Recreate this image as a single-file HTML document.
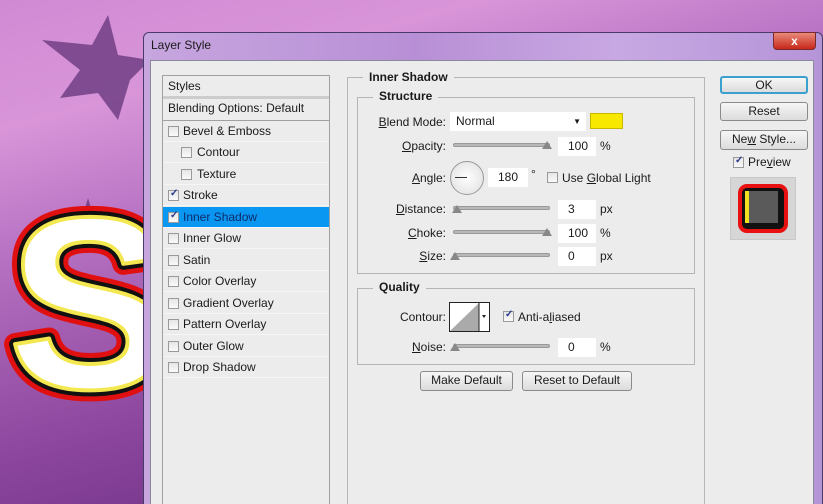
<!DOCTYPE html>
<html style="overflow:hidden"><head><style>
*{box-sizing:border-box;margin:0;padding:0}
html,body{width:823px;height:504px;overflow:hidden}
body{position:relative;font-family:"Liberation Sans",sans-serif;font-size:12px;color:#1a1a1a;
background:linear-gradient(165deg,#d08ad4 0%,#d995d8 18%,#b873c4 35%,#a05aae 50%,#8a449c 65%,#6e3284 85%,#5a2870 100%)}
.abs{position:absolute}
.dlg{left:143px;top:32px;width:680px;height:480px;border:1px solid #4a3a6a;border-radius:6px 6px 0 0;background:linear-gradient(90deg,#c7a6df,#b88fd6 40%,#c8a8e2 70%,#b594d8);}
.client{left:150px;top:60px;width:664px;height:450px;background:#ececec;border:1px solid #8a8a9a}
.list{left:162px;top:75px;width:168px;height:440px;border:1px solid #a0a0a0;background:#ececec}
.row{position:absolute;left:0;width:166px;height:21px;border-bottom:1px solid #f6f6f6;line-height:21px;padding-left:20px;font-size:12px}
.cb{position:absolute;width:11px;height:11px;border:1px solid #9a9a9a;background:linear-gradient(#e6e6e6,#fafafa);top:5px;left:5px}
.cb.on::after{content:"✓";position:absolute;left:1px;top:-3px;font-size:10px;line-height:12px;color:#2a3a8a;font-weight:bold}
.sel{background:#0a97f2;color:#0c2a6a}
.box{position:absolute;border:1px solid #b5b5b5}
.leg{position:absolute;background:#ececec;font-weight:bold;padding:0 6px;font-size:12px}
.lbl{position:absolute;text-align:right;font-size:12px}
.inp{position:absolute;background:#fff;height:19px;line-height:19px;padding-left:10px;font-size:12px}
.sl{position:absolute;height:4px;border-radius:2px;background:#b8b8b8;border:1px solid #999}
.th{position:absolute;width:0;height:0;border-left:5px solid transparent;border-right:5px solid transparent;border-bottom:8px solid #888}
.btn{position:absolute;border:1px solid #8a8a8a;border-radius:3px;background:linear-gradient(#f6f6f6,#dcdcdc);text-align:center;font-size:12px;line-height:17px}
u{text-decoration:underline}
</style></head><body>
<svg class="abs" style="left:0;top:0" width="150" height="504">
<polygon points="108,15 118,55 150,60 130,80 118,120 98,93 60,98 80,70 42,40 92,45" fill="#6a3a80" opacity=".8"/>
<polygon points="88,198 93,215 108,217 95,225 97,238 87,230 75,238 78,225 68,217 83,215" fill="#6a3a80" opacity=".8"/>
<text x="8" y="388" font-family="Liberation Sans" font-weight="bold" font-size="245" fill="#fff" stroke="#e01010" stroke-width="22" stroke-linejoin="round">S</text>
<text x="8" y="388" font-family="Liberation Sans" font-weight="bold" font-size="245" fill="#fff" stroke="#111" stroke-width="12" stroke-linejoin="round">S</text>
<text x="8" y="388" font-family="Liberation Sans" font-weight="bold" font-size="245" fill="#fff" stroke="#f4e850" stroke-width="4" stroke-linejoin="round">S</text>
</svg>
<div class="abs dlg"></div>
<div class="abs" style="left:151px;top:38px;font-size:12px">Layer Style</div>
<div class="abs" style="left:773px;top:32px;width:43px;height:18px;border-radius:0 0 4px 4px;background:linear-gradient(#e88a7a,#c8281a);border:1px solid #7a2a2a;color:#fff;text-align:center;font-weight:bold;line-height:16px">x</div>
<div class="abs client"></div>
<div class="abs list">
<div class="row" style="top:0;padding-left:5px;border-bottom:3px solid #ccc;height:23px">Styles</div>
<div class="row" style="top:22px;padding-left:5px;border-bottom:1px solid #a0a0a0;height:23px">Blending Options: Default</div>
<div class="row" style="top:45px"><span class="cb"></span>Bevel &amp; Emboss</div>
<div class="row" style="top:66px;padding-left:34px"><span class="cb" style="left:18px"></span>Contour</div>
<div class="row" style="top:88px;padding-left:34px"><span class="cb" style="left:18px"></span>Texture</div>
<div class="row" style="top:109px"><span class="cb on"></span>Stroke</div>
<div class="row sel" style="top:131px"><span class="cb on"></span>Inner Shadow</div>
<div class="row" style="top:152px"><span class="cb"></span>Inner Glow</div>
<div class="row" style="top:174px"><span class="cb"></span>Satin</div>
<div class="row" style="top:195px"><span class="cb"></span>Color Overlay</div>
<div class="row" style="top:217px"><span class="cb"></span>Gradient Overlay</div>
<div class="row" style="top:238px"><span class="cb"></span>Pattern Overlay</div>
<div class="row" style="top:260px"><span class="cb"></span>Outer Glow</div>
<div class="row" style="top:281px"><span class="cb"></span>Drop Shadow</div>
</div>
<div class="box" style="left:347px;top:77px;width:358px;height:440px"></div>
<div class="leg" style="left:363px;top:70px">Inner Shadow</div>
<div class="box" style="left:357px;top:97px;width:338px;height:177px"></div>
<div class="leg" style="left:373px;top:89px">Structure</div>
<div class="lbl" style="left:370px;top:115px;width:76px"><u>B</u>lend Mode:</div>
<div class="inp" style="left:450px;top:112px;width:136px;padding-left:6px">Normal<span style="position:absolute;right:5px;font-size:8px">▼</span></div>
<div class="abs" style="left:590px;top:113px;width:33px;height:16px;background:#f8e800;border:1px solid #c8b800"></div>
<div class="lbl" style="left:370px;top:139px;width:76px"><u>O</u>pacity:</div>
<div class="sl" style="left:453px;top:143px;width:97px"></div><div class="th" style="left:542px;top:141px"></div>
<div class="inp" style="left:558px;top:137px;width:38px">100</div><div class="lbl" style="left:600px;top:139px">%</div>
<div class="lbl" style="left:370px;top:171px;width:76px"><u>A</u>ngle:</div>
<div class="abs" style="left:450px;top:161px;width:34px;height:34px;border-radius:50%;border:1px solid #999;background:radial-gradient(#fff,#ddd)"></div>
<div class="abs" style="left:455px;top:177px;width:12px;height:1px;background:#333"></div>
<div class="inp" style="left:488px;top:168px;width:40px">180</div>
<div class="lbl" style="left:531px;top:167px">°</div>
<div class="cb abs" style="left:547px;top:172px"></div><div class="lbl" style="left:562px;top:171px">Use <u>G</u>lobal Light</div>
<div class="lbl" style="left:370px;top:202px;width:76px"><u>D</u>istance:</div>
<div class="sl" style="left:453px;top:206px;width:97px"></div><div class="th" style="left:452px;top:205px"></div>
<div class="inp" style="left:558px;top:200px;width:38px">3</div><div class="lbl" style="left:600px;top:202px">px</div>
<div class="lbl" style="left:370px;top:226px;width:76px"><u>C</u>hoke:</div>
<div class="sl" style="left:453px;top:230px;width:97px"></div><div class="th" style="left:542px;top:228px"></div>
<div class="inp" style="left:558px;top:224px;width:38px">100</div><div class="lbl" style="left:600px;top:226px">%</div>
<div class="lbl" style="left:370px;top:249px;width:76px"><u>S</u>ize:</div>
<div class="sl" style="left:453px;top:253px;width:97px"></div><div class="th" style="left:450px;top:252px"></div>
<div class="inp" style="left:558px;top:247px;width:38px">0</div><div class="lbl" style="left:600px;top:249px">px</div>
<div class="box" style="left:357px;top:288px;width:338px;height:77px"></div>
<div class="leg" style="left:373px;top:280px">Quality</div>
<div class="lbl" style="left:370px;top:310px;width:76px">Contour:</div>
<svg class="abs" style="left:449px;top:302px" width="41" height="30"><rect x="0.5" y="0.5" width="40" height="29" fill="#fff" stroke="#222"/><polygon points="1,29 30,1 30,29" fill="#aaa"/><line x1="30" y1="0" x2="30" y2="30" stroke="#222"/><polygon points="33,13 37,13 35,16" fill="#222"/></svg>
<div class="cb on abs" style="left:503px;top:311px"></div><div class="lbl" style="left:518px;top:310px">Anti-a<u>l</u>iased</div>
<div class="lbl" style="left:370px;top:340px;width:76px"><u>N</u>oise:</div>
<div class="sl" style="left:453px;top:344px;width:97px"></div><div class="th" style="left:450px;top:343px"></div>
<div class="inp" style="left:558px;top:338px;width:38px">0</div><div class="lbl" style="left:600px;top:340px">%</div>
<div class="btn" style="left:420px;top:371px;width:93px;height:20px">Make Default</div>
<div class="btn" style="left:522px;top:371px;width:110px;height:20px">Reset to Default</div>
<div class="btn" style="left:720px;top:76px;width:88px;height:18px;border:2px solid #3aa0d0;line-height:14px">OK</div>
<div class="btn" style="left:720px;top:102px;width:88px;height:19px">Reset</div>
<div class="btn" style="left:720px;top:130px;width:88px;height:20px">Ne<u>w</u> Style...</div>
<div class="cb on abs" style="left:733px;top:157px"></div><div class="lbl" style="left:748px;top:155px">Pre<u>v</u>iew</div>
<div class="abs" style="left:730px;top:177px;width:66px;height:63px;background:#d6d6d6;border:1px solid #c8c8c8"></div>
<div class="abs" style="left:738px;top:184px;width:50px;height:49px;background:#111;border:4px solid #e81010;border-radius:9px"></div>
<div class="abs" style="left:745px;top:191px;width:33px;height:32px;background:#5a5a5a"></div>
<div class="abs" style="left:745px;top:191px;width:4px;height:32px;background:#f0e020"></div>
</body></html>
